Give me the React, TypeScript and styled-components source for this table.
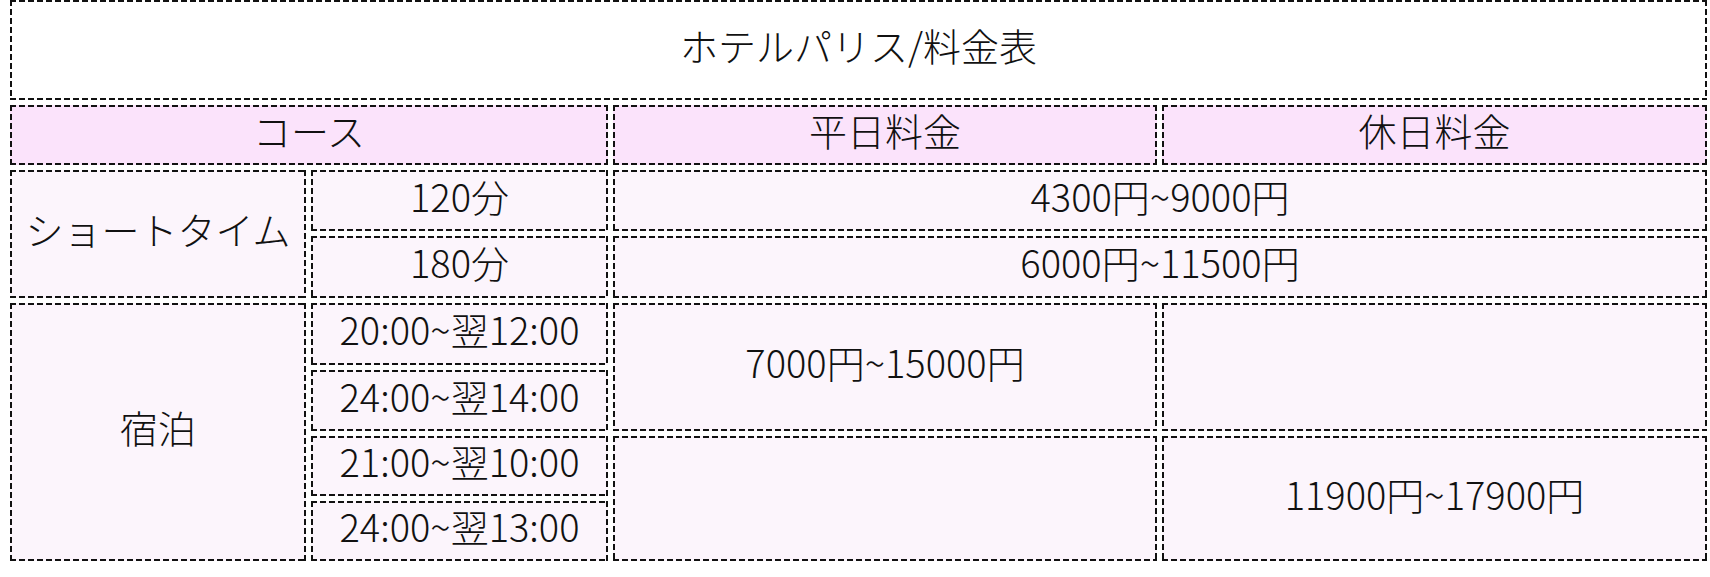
import styled, { createGlobalStyle } from 'styled-components';

const GlobalStyle = createGlobalStyle`
  html, body {
    margin: 0;
    padding: 0;
    background: #ffffff;
  }
  body {
    font-family: "Noto Sans CJK JP", "Noto Sans", sans-serif;
    color: #111111;
  }
`;

type Tone = 'title' | 'head' | 'body';

const toneBg: Record<Tone, string> = {
  title: '#ffffff',
  head: '#fbe3fb',
  body: '#fcf5fc',
};

// dashed frame drawn with gradients so the dash length matches (6px dash, 3px gap)
const dashH = 'repeating-linear-gradient(90deg, #111 0 6px, transparent 6px 9px)';
const dashV = 'repeating-linear-gradient(180deg, #111 0 6px, transparent 6px 9px)';

const Page = styled.div`
  padding: 0 0 0 10px;
`;

const PriceGrid = styled.div`
  display: grid;
  grid-template-columns: 296px 297px 544px 545px;
  grid-template-rows: 100px 60px 61px 62px 62px 61px 60px 60px;
  gap: 5px;
`;

const Cell = styled.div<{
  $col: number;
  $row: number;
  $colSpan?: number;
  $rowSpan?: number;
  $tone?: Tone;
}>`
  grid-column: ${p => p.$col} / span ${p => p.$colSpan ?? 1};
  grid-row: ${p => p.$row} / span ${p => p.$rowSpan ?? 1};
  display: flex;
  align-items: center;
  justify-content: center;
  box-sizing: border-box;
  padding-bottom: 10px;
  background:
    ${dashH} top left / 100% 2px no-repeat,
    ${dashH} bottom left / 100% 2px no-repeat,
    ${dashV} top left / 2px 100% no-repeat,
    ${dashV} top right / 2px 100% no-repeat,
    ${p => toneBg[p.$tone ?? 'body']};
  font-size: 38px;
  font-weight: 300;
  line-height: 1;
  white-space: nowrap;
`;

const App = () => {
  return (
    <Page>
      <GlobalStyle />
      <PriceGrid>
        <Cell $col={1} $row={1} $colSpan={4} $tone="title">ホテルパリス/料金表</Cell>

        <Cell $col={1} $row={2} $colSpan={2} $tone="head">コース</Cell>
        <Cell $col={3} $row={2} $tone="head">平日料金</Cell>
        <Cell $col={4} $row={2} $tone="head">休日料金</Cell>

        <Cell $col={1} $row={3} $rowSpan={2}>ショートタイム</Cell>
        <Cell $col={2} $row={3}>120分</Cell>
        <Cell $col={3} $row={3} $colSpan={2}>4300円~9000円</Cell>
        <Cell $col={2} $row={4}>180分</Cell>
        <Cell $col={3} $row={4} $colSpan={2}>6000円~11500円</Cell>

        <Cell $col={1} $row={5} $rowSpan={4}>宿泊</Cell>
        <Cell $col={2} $row={5}>20:00~翌12:00</Cell>
        <Cell $col={3} $row={5} $rowSpan={2}>7000円~15000円</Cell>
        <Cell $col={4} $row={5} $rowSpan={2} />
        <Cell $col={2} $row={6}>24:00~翌14:00</Cell>
        <Cell $col={2} $row={7}>21:00~翌10:00</Cell>
        <Cell $col={3} $row={7} $rowSpan={2} />
        <Cell $col={4} $row={7} $rowSpan={2}>11900円~17900円</Cell>
        <Cell $col={2} $row={8}>24:00~翌13:00</Cell>
      </PriceGrid>
    </Page>
  );
};

export default App;
